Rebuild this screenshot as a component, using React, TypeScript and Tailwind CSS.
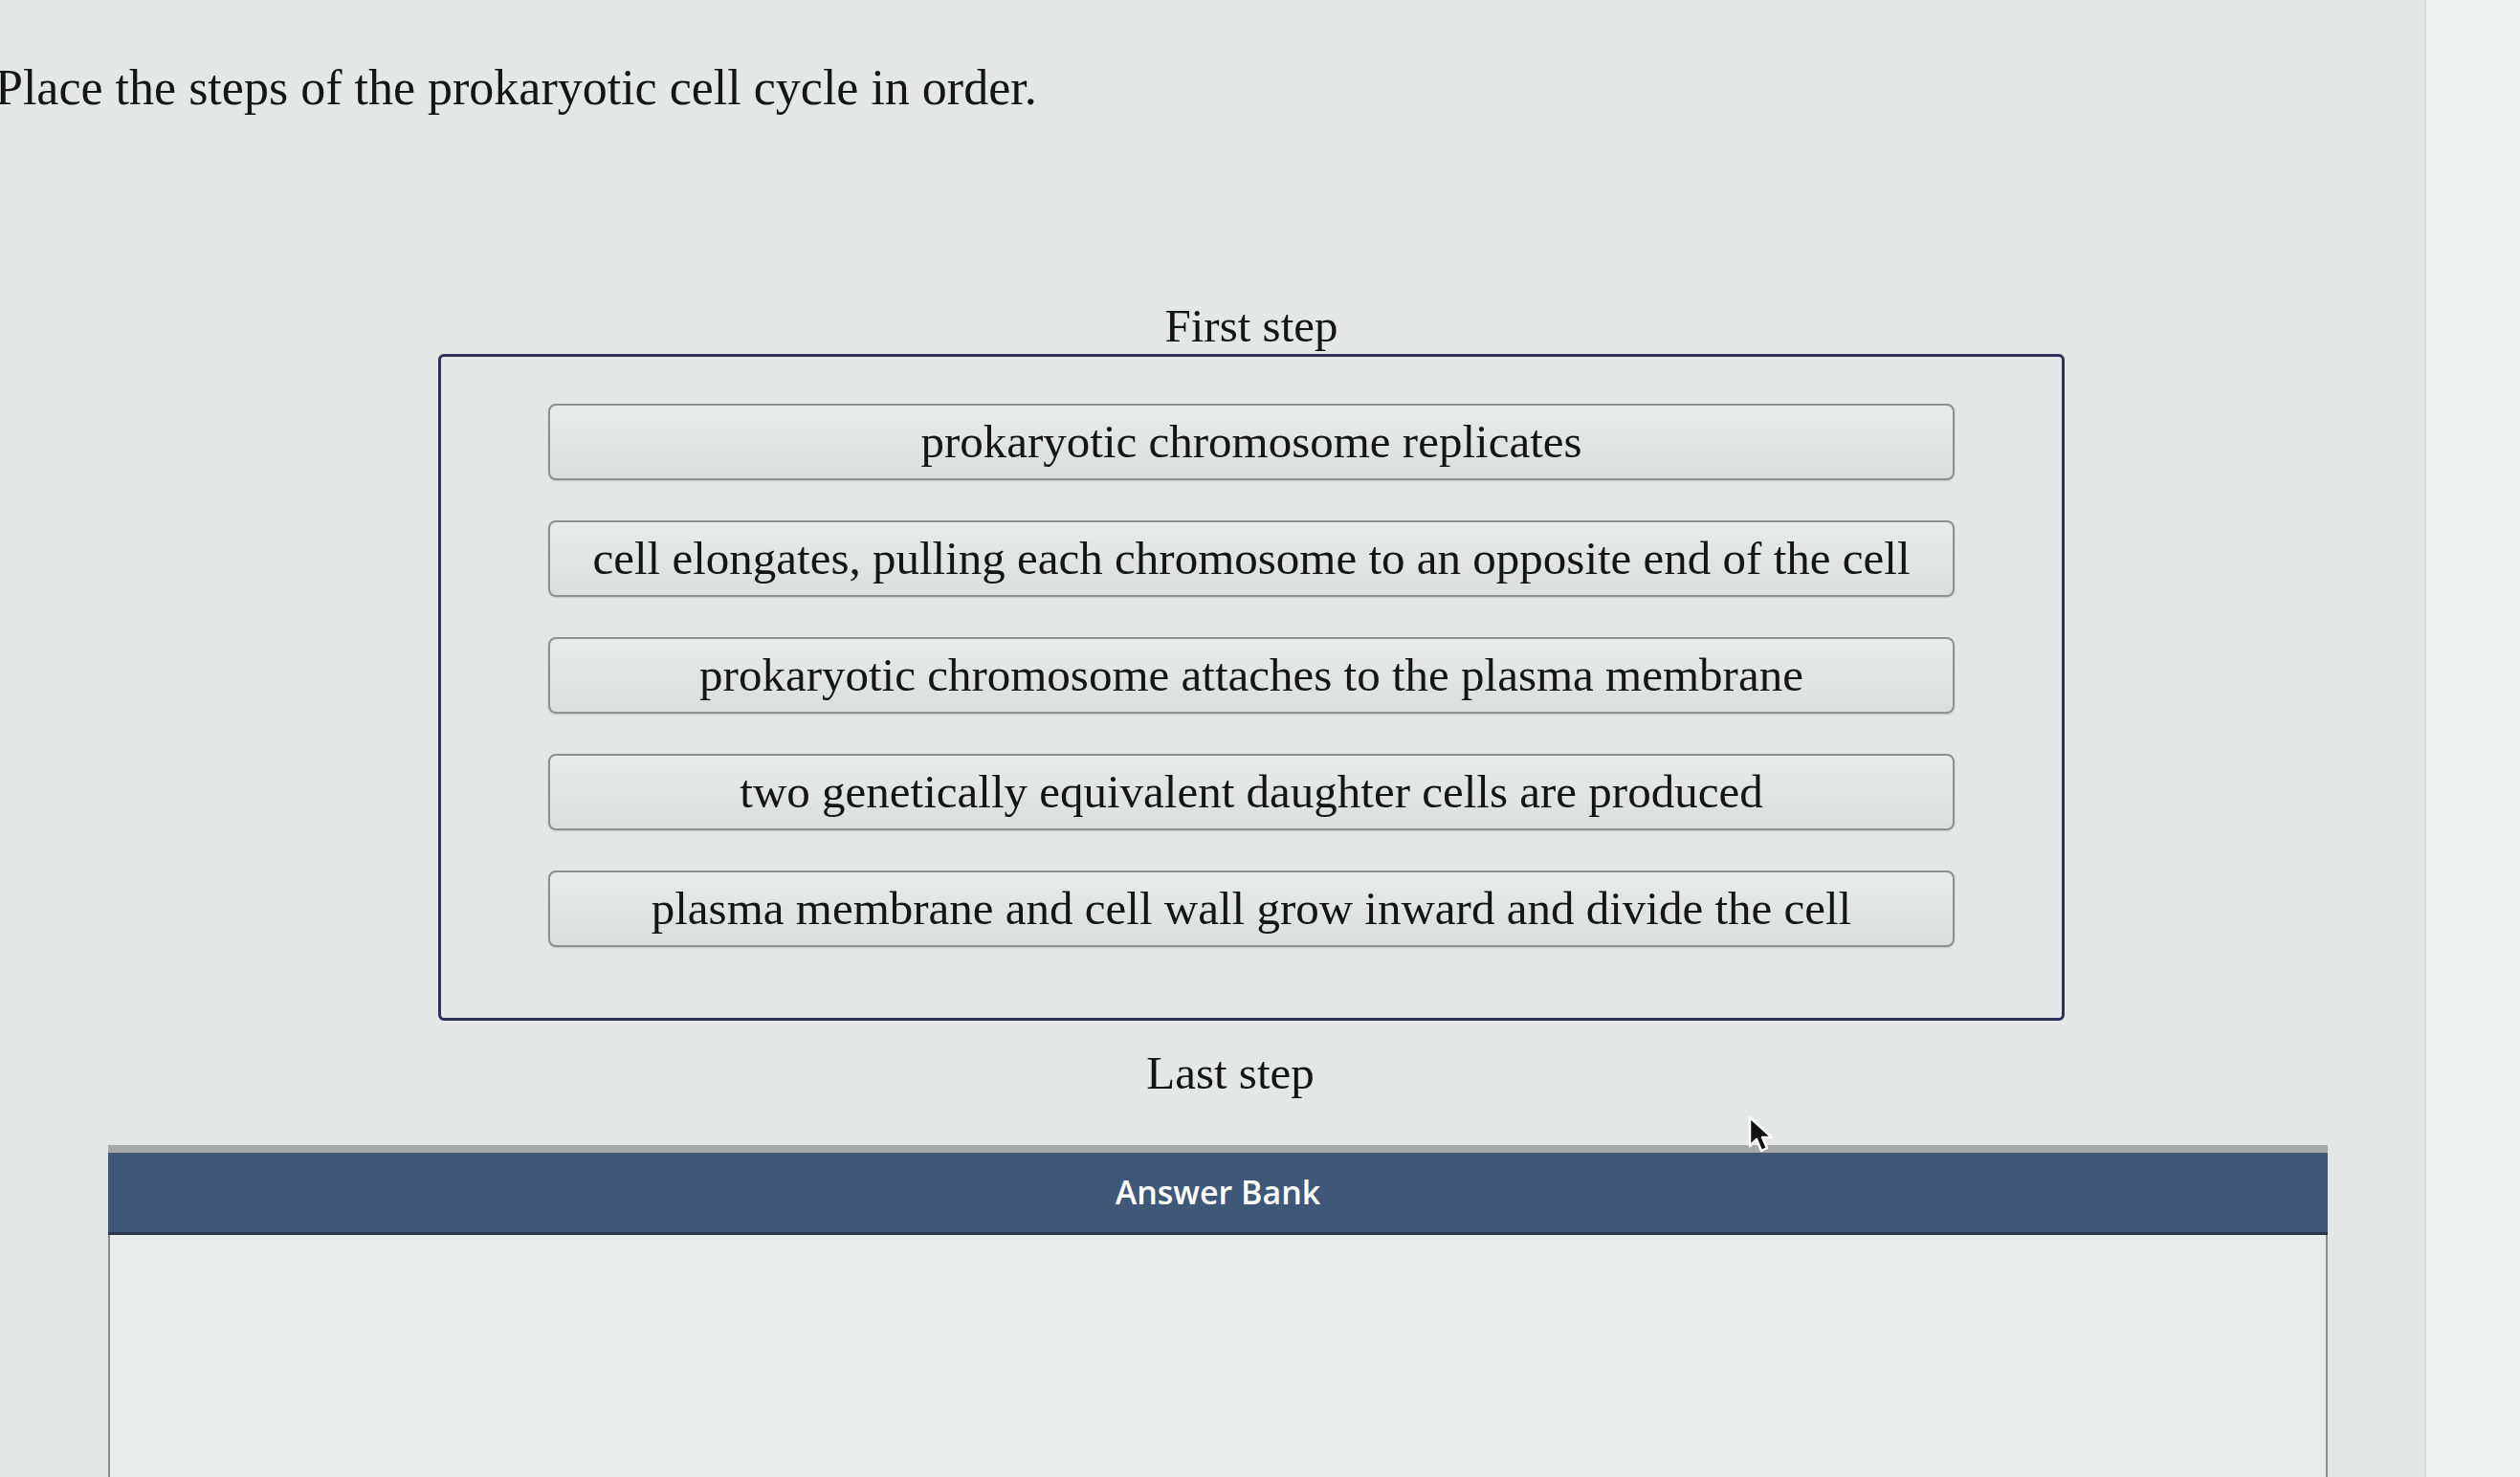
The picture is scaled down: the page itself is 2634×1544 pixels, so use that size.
const steps = [
  'prokaryotic chromosome replicates',
  'cell elongates, pulling each chromosome to an opposite end of the cell',
  'prokaryotic chromosome attaches to the plasma membrane',
  'two genetically equivalent daughter cells are produced',
  'plasma membrane and cell wall grow inward and divide the cell',
];

function Cursor() {
  return (
    <svg className="absolute left-[1826px] top-[1166px]" width="30" height="42" viewBox="0 0 30 42">
      <path d="M3 2 L3 32 L10 25 L15 37 L21 34 L16 23 L26 23 Z" fill="#111" stroke="#fff" strokeWidth="2.5" strokeLinejoin="round" />
    </svg>
  );
}

export default function App() {
  return (
    <div className="relative h-[1544px] w-full overflow-hidden bg-[#e5e7e6] font-['Liberation_Serif',serif] text-[#151515]">
      <div className="flex h-[1544px]">
        <div className="flex flex-1 flex-col">
          <h1 className="-ml-[5px] pt-[50px] text-[52px] leading-[84px]">
            Place the steps of the prokaryotic cell cycle in order.
          </h1>

          <div className="ml-[458px] mt-[176px] flex w-[1700px] flex-col items-center">
            <div className="-mb-[2px] text-[49px] leading-[62px]">First step</div>
            <div className="flex w-full flex-col gap-[42px] rounded-[6px] border-[3px] border-[#2d3158] px-[112px] pb-[74px] pt-[49px]">
              {steps.map((s) => (
                <div
                  key={s}
                  className="flex h-[80px] items-center justify-center rounded-[8px] border-2 border-[#8d8f90] bg-gradient-to-b from-[#e9ebea] to-[#dcdedd] text-[49px] shadow-[0_1px_2px_rgba(0,0,0,0.15)]"
                >
                  {s}
                </div>
              ))}
            </div>
            <div className="mt-[24px] -ml-[44px] text-[49px] leading-[62px]">Last step</div>
          </div>

          <div className="ml-[113px] mt-[44px] flex w-[2320px] flex-1 flex-col">
            <div className="h-[8px] bg-[#a5a8a9]" />
            <div className="flex h-[86px] items-center justify-center border-b-[3px] border-[#2a3650] bg-[#3f5877] font-['Open_Sans',sans-serif] text-[34px] font-semibold text-white">
              Answer Bank
            </div>
            <div className="flex-1 border-x-2 border-[#8b8e90] bg-[#eaeceb]" />
          </div>
        </div>
        <div className="w-[100px] border-l-2 border-[#d5d8d7] bg-[#eef0ef]" />
      </div>
      <Cursor />
    </div>
  );
}
